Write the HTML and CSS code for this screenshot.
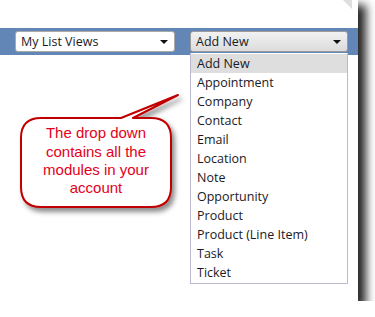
FILE: index.html
```html
<!DOCTYPE html>
<html lang="en">
<head>
  <meta charset="UTF-8">
  <title>Add New</title>
  <link rel="stylesheet" href="styles.css">
</head>
<body>
  <div class="page">
    <div class="curl"></div>

    <div class="toolbar">
      <div class="select views">
        <span>My List Views</span>
        <span class="arrow"></span>
      </div>

      <div class="add-wrap">
        <div class="select add">
          <span>Add New</span>
          <span class="arrow"></span>
        </div>
        <ul class="menu">
          <li class="active">Add New</li>
          <li>Appointment</li>
          <li>Company</li>
          <li>Contact</li>
          <li>Email</li>
          <li>Location</li>
          <li>Note</li>
          <li>Opportunity</li>
          <li>Product</li>
          <li>Product (Line Item)</li>
          <li>Task</li>
          <li>Ticket</li>
        </ul>
      </div>
    </div>

    <svg class="callout" width="357" height="302" viewBox="0 0 357 302">
      <defs>
        <filter id="shade" x="-20%" y="-20%" width="150%" height="150%">
          <feDropShadow dx="3" dy="4" stdDeviation="2.5" flood-color="#000" flood-opacity="0.45"/>
        </filter>
      </defs>
      <path d="M41 118 L121 118 L178 95 L133 118 L151 118 Q171 118 171 138 L171 187 Q171 207 151 207 L41 207 Q21 207 21 187 L21 138 Q21 118 41 118 Z"
            fill="#fff" stroke="#c00000" stroke-width="2" stroke-linejoin="round" filter="url(#shade)"/>
      <text x="96" y="138">The drop down</text>
      <text x="96" y="157">contains all the</text>
      <text x="96" y="175">modules in your</text>
      <text x="96" y="193">account</text>
    </svg>
  </div>
</body>
</html>
```

FILE: styles.css
```css
:root {
  --bar: #6287b7;
  --text: #1a1a26;
  --menu-border: #b9b9d2;
}

body {
  margin: 0;
  background: #fff;
  font-family: 'Open Sans', 'Noto Sans', sans-serif;
  color: var(--text);
}

.page {
  position: relative;
  width: 358px;
  height: 301px;
  padding-top: 28px;
  box-sizing: border-box;
  background: #fff;
  box-shadow: 7px 6px 9px 1px rgba(0,0,0,0.85);
}

.curl {
  position: absolute;
  top: 0;
  right: 6px;
  width: 9px;
  height: 9px;
  background: #dedede;
  clip-path: polygon(0 0, 100% 0, 100% 100%);
}

.toolbar {
  height: 27px;
  background: var(--bar);
  display: flex;
  align-items: center;
  gap: 15px;
  padding-left: 15px;
}

.select {
  height: 21px;
  box-sizing: border-box;
  border: 1px solid #a9a9a9;
  border-radius: 3px;
  display: flex;
  align-items: center;
  justify-content: space-between;
  padding: 0 6px 0 5px;
  font-size: 12.5px;
}

.views {
  width: 160px;
  background: #fff;
}

.add {
  width: 158px;
  background: linear-gradient(#f2f2f2, #dcdcdc);
  border-color: #9c9c9c;
}

.arrow {
  width: 0;
  height: 0;
  border-left: 4px solid transparent;
  border-right: 4px solid transparent;
  border-top: 4px solid #111;
}

.add-wrap {
  position: relative;
}

.menu {
  position: absolute;
  top: 22px;
  left: 0;
  width: 158px;
  box-sizing: border-box;
  margin: 0;
  padding: 1px 0 1px;
  list-style: none;
  background: #fff;
  border: 1px solid var(--menu-border);
  border-top: none;
  font-size: 12.5px;
}

.menu li {
  height: 19px;
  line-height: 19px;
  padding-left: 6px;
}

.menu li.active {
  background: #dedede;
}

.callout {
  position: absolute;
  top: 0;
  left: 0;
}

.callout text {
  font-family: 'Liberation Sans', Arial, sans-serif;
  font-size: 15px;
  fill: #e4001a;
  text-anchor: middle;
}
```
